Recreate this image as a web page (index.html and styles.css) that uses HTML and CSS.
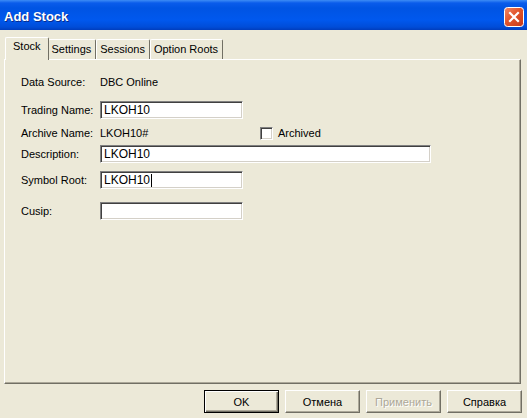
FILE: index.html
```html
<!DOCTYPE html>
<html lang="en">
<head>
    <meta charset="UTF-8">
    <title>Add Stock</title>
    <link rel="stylesheet" href="styles.css">
</head>
<body>
    <div class="window">
        <div class="titlebar">
            <span class="title">Add Stock</span>
            <span class="close">
                <svg width="20" height="20" viewBox="0 0 20 20">
                    <defs>
                        <linearGradient id="red" x1="0" y1="0" x2="1" y2="1">
                            <stop offset="0" stop-color="#f08a6a"/>
                            <stop offset="0.45" stop-color="#e2552c"/>
                            <stop offset="1" stop-color="#c4391a"/>
                        </linearGradient>
                    </defs>
                    <rect x="0.5" y="0.5" width="19" height="19" rx="3" fill="url(#red)" stroke="#fff"/>
                    <path d="M6 6 L14 14 M14 6 L6 14" stroke="#fff" stroke-width="2.2" stroke-linecap="square"/>
                </svg>
            </span>
        </div>
        <div class="client">
            <div class="tabs">
                <div class="tab active">Stock</div>
                <div class="tab">Settings</div>
                <div class="tab">Sessions</div>
                <div class="tab">Option Roots</div>
            </div>
            <div class="panel">
                <div class="form">
                    <div class="label">Data Source:</div>
                    <div class="value">DBC Online</div>

                    <div class="label">Trading Name:</div>
                    <div class="value"><span class="field short">LKOH10</span></div>

                    <div class="label">Archive Name:</div>
                    <div class="value">
                        <span class="archive">LKOH10#</span>
                        <label class="check"><span class="box"></span>Archived</label>
                    </div>

                    <div class="label">Description:</div>
                    <div class="value"><span class="field wide">LKOH10</span></div>

                    <div class="label">Symbol Root:</div>
                    <div class="value"><span class="field short">LKOH10<span class="caret"></span></span></div>

                    <div class="label">Cusip:</div>
                    <div class="value"><span class="field short"></span></div>
                </div>
            </div>
            <div class="buttons">
                <div class="btn default">OK</div>
                <div class="btn">Отмена</div>
                <div class="btn disabled">Применить</div>
                <div class="btn">Справка</div>
            </div>
        </div>
    </div>
</body>
</html>
```

FILE: styles.css
```css
body {
    margin: 0;
    padding: 0;
    background-color: #ece9d8;
    font-family: "Liberation Sans", Arial, sans-serif;
    font-size: 11px;
    color: #000;
    overflow: hidden;
}
.window {
    width: 527px;
    height: 418px;
    display: flex;
    flex-direction: column;
}
.titlebar {
    height: 30px;
    flex: none;
    display: flex;
    align-items: center;
    justify-content: space-between;
    padding: 0 3px 0 4px;
    background: linear-gradient(#3d8cf5 0, #0a5ceb 3px, #0054e3 8px, #0058ee 20px, #004dd8 27px, #003dbd 30px);
}
.title {
    color: #fff;
    font-weight: bold;
    font-size: 13px;
    margin-top: 3px;
    text-shadow: 1px 1px 0 #0a2b8a;
}
.close {
    display: flex;
    margin-top: 4px;
}
.client {
    flex: 1;
    display: flex;
    flex-direction: column;
    padding: 6px 6px 0 4px;
}

/* tabs */
.tabs {
    display: flex;
    align-items: flex-end;
    height: 23px;
    padding-left: 3px;
    position: relative;
    z-index: 1;
}
.tab {
    height: 19px;
    line-height: 19px;
    padding: 0 4px 0 3px;
    border-top: 1px solid #fff;
    border-left: 1px solid #fff;
    border-right: 1px solid #716f64;
    border-radius: 2px 2px 0 0;
    background: #ece9d8;
}
.tab.active {
    height: 22px;
    line-height: 17px;
    padding: 0 7px;
    margin: 0 -1px -1px -2px;
    position: relative;
}
.panel {
    height: 323px;
    border-top: 1px solid #fff;
    border-left: 1px solid #fff;
    border-right: 1px solid #716f64;
    border-bottom: 1px solid #716f64;
    box-shadow: inset -1px -1px 0 #aca899;
}

/* form */
.form {
    display: grid;
    grid-template-columns: 79px 1fr;
    grid-template-rows: 28px 23px 21px 26px 31px 18px;
    align-items: start;
    padding: 13px 0 0 16px;
}
.label,
.value {
    height: 18px;
    display: flex;
    align-items: center;
}
.field {
    height: 18px;
    box-sizing: border-box;
    display: flex;
    align-items: center;
    padding-left: 3px;
    background: #fff;
    font-size: 12px;
    border-top: 1px solid #808080;
    border-left: 1px solid #808080;
    border-right: 1px solid #fff;
    border-bottom: 1px solid #fff;
    box-shadow: inset 1px 1px 0 #404040, inset -1px -1px 0 #d4d0c8;
}
.field.short {
    width: 143px;
}
.field.wide {
    width: 331px;
}
.caret {
    display: inline-block;
    width: 1px;
    height: 13px;
    background: #000;
    margin-left: 1px;
}
.archive {
    width: 160px;
}
.check {
    display: flex;
    align-items: center;
}
.box {
    width: 11px;
    height: 11px;
    margin-right: 5px;
    background: #fff;
    border-top: 1px solid #808080;
    border-left: 1px solid #808080;
    border-right: 1px solid #fff;
    border-bottom: 1px solid #fff;
    box-shadow: inset 1px 1px 0 #404040, inset -1px -1px 0 #d4d0c8;
}

/* buttons */
.buttons {
    display: flex;
    justify-content: flex-end;
    gap: 6px;
    padding-top: 6px;
    margin-right: -1px;
}
.btn {
    width: 75px;
    height: 23px;
    box-sizing: border-box;
    display: flex;
    align-items: center;
    justify-content: center;
    background: #ece9d8;
    border-top: 1px solid #fff;
    border-left: 1px solid #fff;
    border-right: 1px solid #716f64;
    border-bottom: 1px solid #716f64;
    box-shadow: inset -1px -1px 0 #aca899;
}
.btn.default {
    border: 1px solid #000;
    box-shadow: inset 1px 1px 0 #fff, inset -1px -1px 0 #716f64, inset -2px -2px 0 #aca899;
}
.btn.disabled {
    color: #aca899;
    text-shadow: 1px 1px 0 #fff;
}
```
